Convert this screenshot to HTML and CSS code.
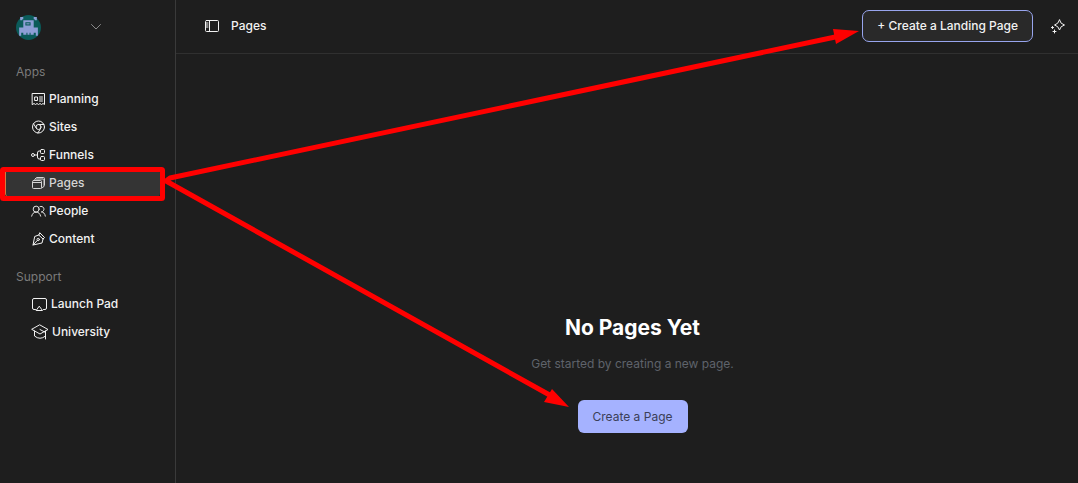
FILE: index.html
```html
<!DOCTYPE html>
<html lang="en">
<head>
  <meta charset="UTF-8">
  <meta name="viewport" content="width=device-width, initial-scale=1">
  <title>Pages</title>
  <link rel="stylesheet" href="styles.css">
</head>
<body>
  <div class="app">
    <aside class="sidebar">
      <button class="account" type="button" aria-label="Switch account">
        <svg class="avatar" viewBox="0 0 24 24" aria-hidden="true">
          <circle cx="12" cy="12" r="12" fill="#0b5b5a"/>
          <path fill="#8d9fd6" d="M4 2h3v2H6v1H4zM17 2h3v3h-2V4h-1z"/>
          <path fill="#8d9fd6" fill-rule="evenodd" d="M7 5h10v7h4v8h-2v-3h-2v2h-3v-2h-1v2h-2v-2h-1v2H7v-2H5v3H3v-8h4zM9 7v3h5V7z"/>
          <path fill="#8d9fd6" d="M10 8h3v1h-3z"/>
        </svg>
        <svg class="chevron" viewBox="0 0 10 6" aria-hidden="true"><path d="M.5.5 5 5 9.500.5"/></svg>
      </button>

      <nav class="group" aria-label="Apps">
        <h3>Apps</h3>
        <ul>
          <li><a href="#planning">
            <svg class="icon" viewBox="0 0 15 14"><path d="M1.500 1.500h12v11l-1.500-1-1.500 1-1.500-1-1.500 1-1.500-1-1.500 1-1.500-1-1.500 1zM4 5h2.500v3.500H4zM8.500 5h3M8.500 7h3M8.500 9h3"/></svg>
            Planning</a></li>
          <li><a href="#sites">
            <svg class="icon" viewBox="0 0 15 14"><circle cx="7.500" cy="7" r="6"/><circle cx="7.500" cy="7" r="2.500"/><path d="M7.500 4.500h5.400M5.300 8.200 2.500 3.700M9.700 8.200 6.900 13"/></svg>
            Sites</a></li>
          <li><a href="#funnels">
            <svg class="icon" viewBox="0 0 15 14"><circle cx="2" cy="7" r="1.500"/><path d="M3.500 7h3M9.500 3H8Q6.500 3 6.500 5v4q0 2 1.500 2h1.500"/><rect x="9.500" y="1.500" width="4" height="4" rx="1"/><rect x="9.500" y="8.500" width="4" height="4" rx="1"/></svg>
            Funnels</a></li>
          <li><a class="active" href="#pages" aria-current="page">
            <svg class="icon" viewBox="0 0 15 14"><rect x="1.500" y="4.500" width="9" height="8" rx="1"/><path d="M1.500 6.500h9M3 4.500 4.500 3H12q1 0 1 1v6.500l-2.500 1.500M4 3l1.500-1.500H12.500q1 0 1 1V9"/></svg>
            Pages</a></li>
          <li><a href="#people">
            <svg class="icon" viewBox="0 0 16 14"><circle cx="5.500" cy="5" r="3.200"/><path d="M.7 12.500q1-4.300 4.800-4.300t4.800 4.300M9.500 2.300a3 3 0 1 1 1.500 5.700q3.500 0 4.300 4.500"/></svg>
            People</a></li>
          <li><a href="#content">
            <svg class="icon" viewBox="0 0 15 14"><path d="m9 1 4.500 4.500L12 7l-1 4-9 2 1.700-8.500 4-1.500zM7.700 3 12 7M2 13l4.300-4.500"/><circle cx="7.200" cy="7.500" r="1.200"/></svg>
            Content</a></li>
        </ul>
      </nav>

      <nav class="group" aria-label="Support">
        <h3>Support</h3>
        <ul>
          <li><a href="#launch-pad">
            <svg class="icon screen" viewBox="0 0 17 14"><path d="M4.500 12.500H3q-1.500 0-1.500-1.500V3Q1.500 1.500 3 1.500h11q1.500 0 1.500 1.500v8q0 1.500-1.500 1.500h-1.500M8.500 9.500l3 4h-6z"/></svg>
            Launch Pad</a></li>
          <li><a href="#university">
            <svg class="icon cap" viewBox="0 0 18 16"><path d="M9 1 17 5.500 9 10 1 5.500zM3.500 7v5q5.500 4.500 11 0V7M9 5.500l5.500 3V15"/></svg>
            University</a></li>
        </ul>
      </nav>
    </aside>

    <div class="content">
      <header class="topbar">
        <button class="icon-button" type="button" aria-label="Toggle sidebar">
          <svg class="panel" viewBox="0 0 16 14"><rect x="1.500" y="1.500" width="13" height="11" rx="1"/><path d="M5.500 1.500v11M2 4h2M2 6h2M2 8h2"/></svg>
        </button>
        <h1>Pages</h1>
        <button class="outline-button" type="button">+ Create a Landing Page</button>
        <button class="icon-button" type="button" aria-label="Assistant">
          <svg class="sparkle" viewBox="0 0 16 16"><path d="M9.500 2q.8 4 5 5-4.200 1-5 5-1-4-5-5 4-1 5-5zM2.500 8.500v2M1.500 9.500h2M4.500 12v3M3 13.500h3"/></svg>
        </button>
      </header>

      <main class="empty">
        <h2>No Pages Yet</h2>
        <p>Get started by creating a new page.</p>
        <button class="primary-button" type="button">Create a Page</button>
      </main>
    </div>
  </div>

  <!-- callout: highlights the Pages item and points at both create buttons -->
  <svg class="callout" viewBox="0 0 900 420" aria-hidden="true">
    <rect x="2.500" y="169.500" width="160" height="29" rx="1"/>
    <path d="M555 398 166 181l4-3L840 36"/>
    <path class="head" d="M859 31 833 29 836 44zM569 407 552 389 544 402z"/>
  </svg>
</body>
</html>
```
FILE: styles.css
```css
* {
  box-sizing: border-box;
}

body {
  margin: 0;
  background: #1e1e1e;
  color: #f2f2f2;
  font-family: Inter, "Liberation Sans", sans-serif;
  font-size: 12px;
  line-height: 20px;
}

h1,
h2,
h3,
p,
ul {
  margin: 0;
  padding: 0;
}

button {
  font: inherit;
  color: inherit;
  cursor: pointer;
}

svg {
  flex: none;
  fill: none;
  stroke: currentColor;
  stroke-linecap: round;
  stroke-linejoin: round;
}

.app {
  display: flex;
  min-height: 100vh;
}

/* sidebar */
.sidebar {
  flex: none;
  width: 176px;
  border-right: 1px solid #3a3a3a;
}

.account {
  display: flex;
  align-items: center;
  gap: 50px;
  height: 54px;
  padding: 0 16px;
  border: 0;
  background: none;
}

.avatar {
  width: 25px;
  height: 25px;
  stroke: none;
}

.chevron {
  width: 10px;
  height: 6px;
  color: #8a8a8a;
}

.group {
  padding: 8px 15px 0 5px;
}

.group + .group {
  padding-top: 14px;
}

.group h3 {
  padding: 0 0 3px 11px;
  color: #7b7b7b;
  font-size: 12px;
  font-weight: 400;
}

.group ul {
  list-style: none;
}

.group a {
  display: flex;
  align-items: center;
  gap: 3px;
  height: 28px;
  padding-left: 25px;
  border-left: 1px solid transparent;
  border-radius: 4px;
  color: inherit;
  font-weight: 500;
  text-decoration: none;
}

.group a.active {
  border-left-color: #d9773c;
  background: #343434;
  color: #d4d4d4;
}

.icon {
  width: 15px;
  height: 14px;
}

.icon.screen {
  width: 17px;
}

.icon.cap {
  width: 18px;
  height: 16px;
}

/* main area */
.content {
  display: flex;
  flex: 1;
  flex-direction: column;
}

.topbar {
  display: flex;
  align-items: center;
  height: 54px;
  padding: 0 12px 2px 28px;
  border-bottom: 1px solid #303030;
}

.topbar h1 {
  margin: 0 auto 0 11px;
  font-size: 12px;
  font-weight: 500;
}

.icon-button {
  display: flex;
  padding: 0;
  border: 0;
  background: none;
}

.panel {
  width: 16px;
  height: 14px;
}

.sparkle {
  width: 16px;
  height: 16px;
}

.outline-button {
  height: 32px;
  margin-right: 17px;
  padding: 0 14px;
  border: 1px solid #98a5ee;
  border-radius: 7px;
  background: #292929;
  font-weight: 500;
}

.empty {
  display: flex;
  flex: 1;
  flex-direction: column;
  align-items: center;
  justify-content: flex-end;
  padding: 0 0 50px 11px;
}

.empty h2 {
  color: #fff;
  font-size: 21px;
  font-weight: 700;
  line-height: 28px;
}

.empty p {
  margin: 12px 0 26px;
  color: #5f636b;
}

.primary-button {
  height: 33px;
  padding: 0 15px;
  border: 0;
  border-radius: 6px;
  background: #a5b2ff;
  color: #3b3f58;
}

/* callout drawn over the page */
.callout {
  position: absolute;
  top: 0;
  left: 0;
  width: 900px;
  height: 420px;
  pointer-events: none;
  stroke: #f00;
  stroke-width: 5;
}

.callout .head {
  fill: #f00;
  stroke: none;
}
```
